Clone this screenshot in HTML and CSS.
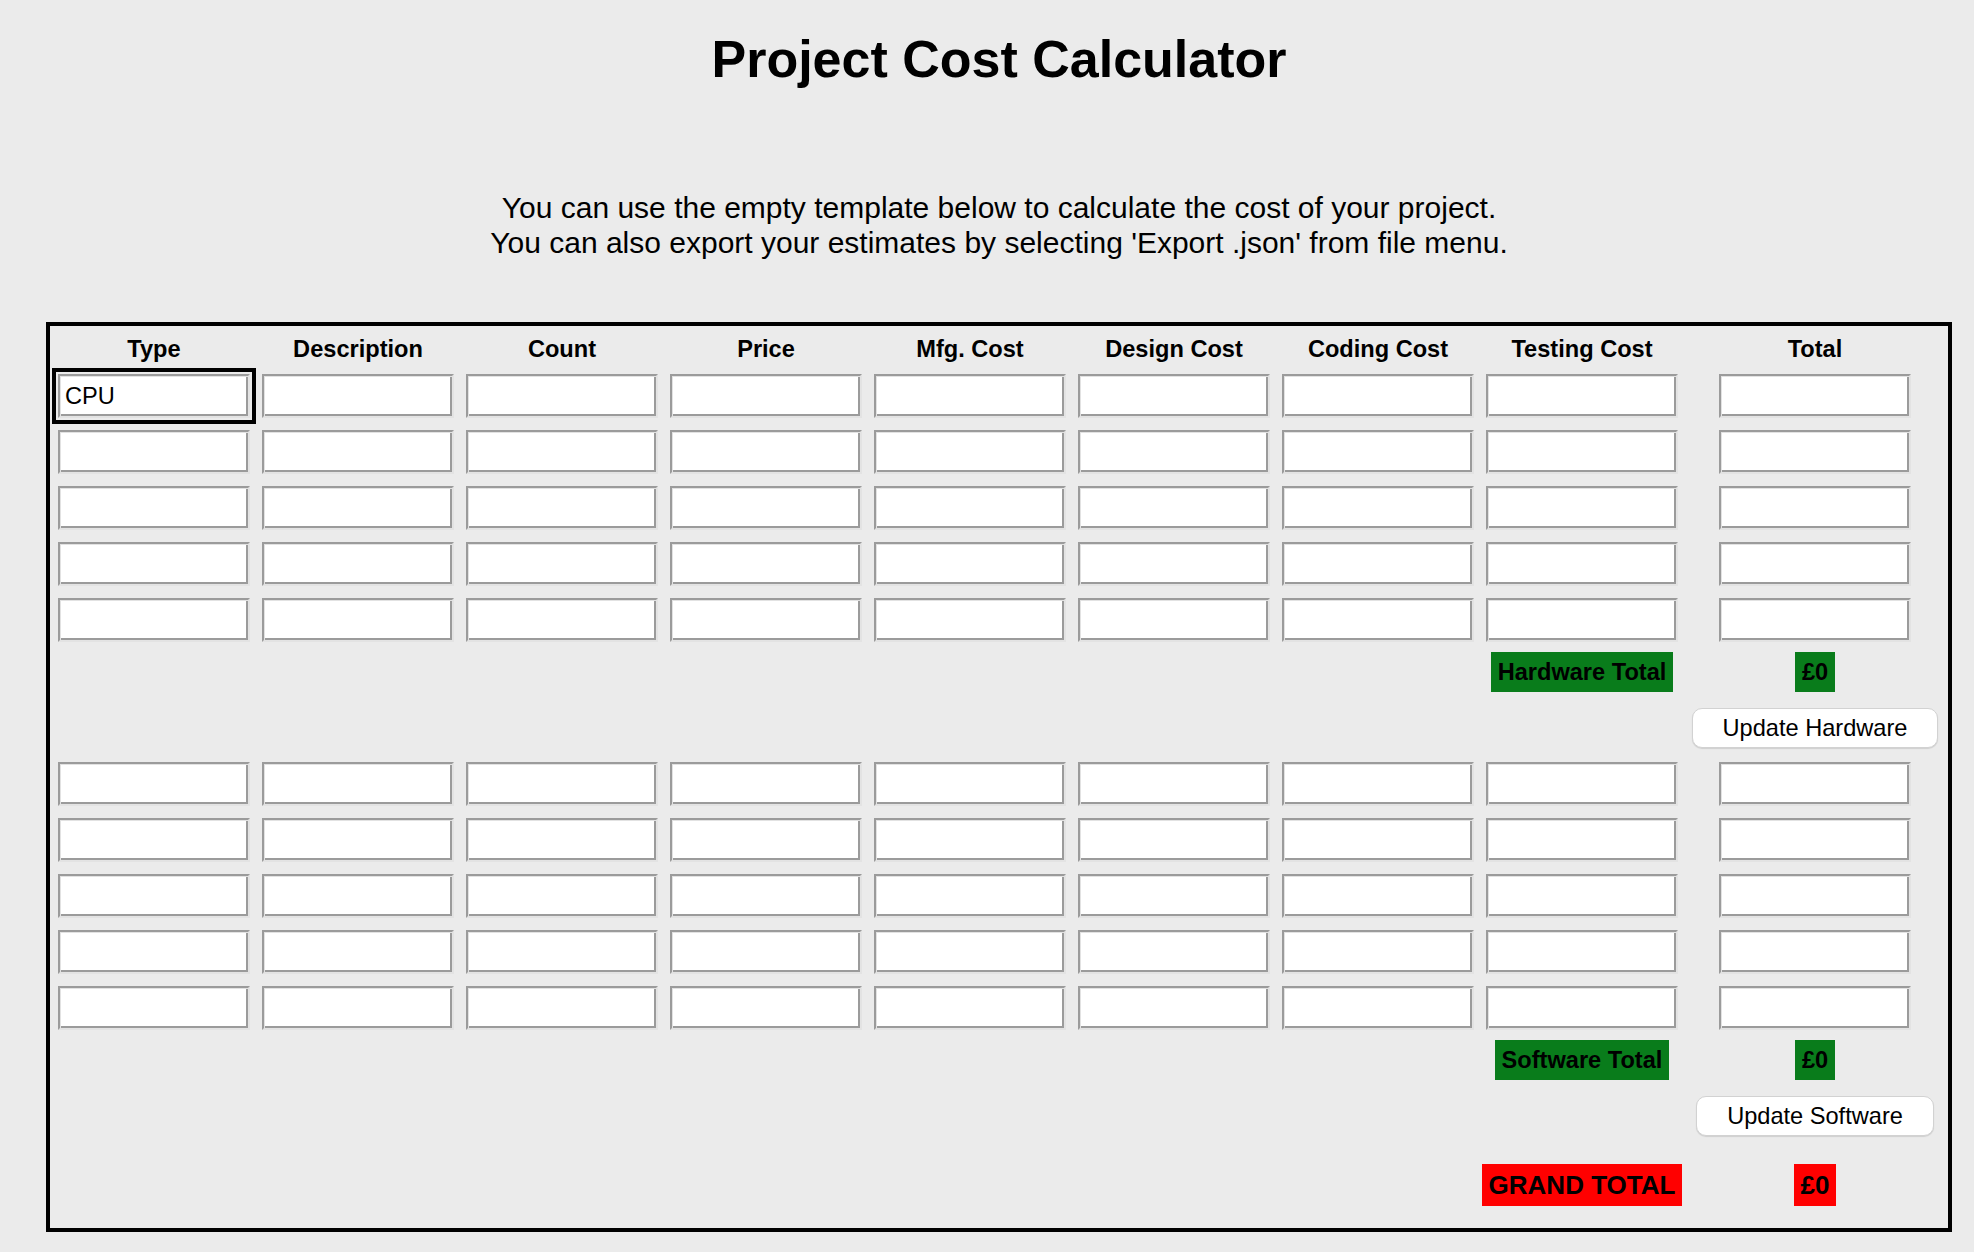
FILE: index.html
```html
<!DOCTYPE html>
<html lang="en">
<head>
<meta charset="utf-8">
<title>Project Cost Calculator</title>
<link rel="stylesheet" href="styles.css">
</head>
<body>
<div class="page">
  <h1 class="title">Project Cost Calculator</h1>
  <p class="intro">You can use the empty template below to calculate the cost of your project.<br>You can also export your estimates by selecting 'Export .json' from file menu.</p>

  <div class="calc">
    <div class="grid head">
      <div>Type</div><div>Description</div><div>Count</div><div>Price</div><div>Mfg. Cost</div><div>Design Cost</div><div>Coding Cost</div><div>Testing Cost</div><div>Total</div>
    </div>

    <div class="items">
      <div class="grid"><input class="field is-focused" type="text" value="CPU"><input class="field" type="text"><input class="field" type="text"><input class="field" type="text"><input class="field" type="text"><input class="field" type="text"><input class="field" type="text"><input class="field" type="text"><input class="field field-total" type="text"></div>
      <div class="grid"><input class="field" type="text"><input class="field" type="text"><input class="field" type="text"><input class="field" type="text"><input class="field" type="text"><input class="field" type="text"><input class="field" type="text"><input class="field" type="text"><input class="field field-total" type="text"></div>
      <div class="grid"><input class="field" type="text"><input class="field" type="text"><input class="field" type="text"><input class="field" type="text"><input class="field" type="text"><input class="field" type="text"><input class="field" type="text"><input class="field" type="text"><input class="field field-total" type="text"></div>
      <div class="grid"><input class="field" type="text"><input class="field" type="text"><input class="field" type="text"><input class="field" type="text"><input class="field" type="text"><input class="field" type="text"><input class="field" type="text"><input class="field" type="text"><input class="field field-total" type="text"></div>
      <div class="grid"><input class="field" type="text"><input class="field" type="text"><input class="field" type="text"><input class="field" type="text"><input class="field" type="text"><input class="field" type="text"><input class="field" type="text"><input class="field" type="text"><input class="field field-total" type="text"></div>
    </div>

    <div class="grid sum">
      <span class="tag tag-green">Hardware Total</span>
      <span class="tag tag-value tag-green">£0</span>
    </div>
    <div class="grid actions">
      <button class="btn" type="button">Update Hardware</button>
    </div>

    <div class="items items-software">
      <div class="grid"><input class="field" type="text"><input class="field" type="text"><input class="field" type="text"><input class="field" type="text"><input class="field" type="text"><input class="field" type="text"><input class="field" type="text"><input class="field" type="text"><input class="field field-total" type="text"></div>
      <div class="grid"><input class="field" type="text"><input class="field" type="text"><input class="field" type="text"><input class="field" type="text"><input class="field" type="text"><input class="field" type="text"><input class="field" type="text"><input class="field" type="text"><input class="field field-total" type="text"></div>
      <div class="grid"><input class="field" type="text"><input class="field" type="text"><input class="field" type="text"><input class="field" type="text"><input class="field" type="text"><input class="field" type="text"><input class="field" type="text"><input class="field" type="text"><input class="field field-total" type="text"></div>
      <div class="grid"><input class="field" type="text"><input class="field" type="text"><input class="field" type="text"><input class="field" type="text"><input class="field" type="text"><input class="field" type="text"><input class="field" type="text"><input class="field" type="text"><input class="field field-total" type="text"></div>
      <div class="grid"><input class="field" type="text"><input class="field" type="text"><input class="field" type="text"><input class="field" type="text"><input class="field" type="text"><input class="field" type="text"><input class="field" type="text"><input class="field" type="text"><input class="field field-total" type="text"></div>
    </div>

    <div class="grid sum">
      <span class="tag tag-green">Software Total</span>
      <span class="tag tag-value tag-green">£0</span>
    </div>
    <div class="grid actions">
      <button class="btn" type="button">Update Software</button>
    </div>

    <div class="grid sum grand">
      <span class="tag tag-grand tag-red">GRAND TOTAL</span>
      <span class="tag tag-grand tag-value tag-red">£0</span>
    </div>
  </div>
</div>
</body>
</html>
```

FILE: styles.css
```css
html, body {
  margin: 0;
  background: #ebebeb;
}

body {
  font-family: "Liberation Sans", Arial, Helvetica, sans-serif;
  color: #000;
}

.page {
  width: 1906px;
  margin-left: 46px;
  padding-top: 29px;
}

.title {
  margin: 0;
  font-size: 52px;
  line-height: 60px;
  font-weight: 700;
  text-align: center;
}

.intro {
  margin: 102px 0 0;
  font-size: 30px;
  line-height: 34.5px;
  text-align: center;
}

.calc {
  margin-top: 62px;
  border: 4px solid #000;
  padding: 10px 8px 22px;
  display: flex;
  flex-direction: column;
}

.grid {
  display: grid;
  grid-template-columns: repeat(8, 192px) 250px;
  column-gap: 12px;
}

.head {
  font-size: 23.6px;
  line-height: 27px;
  font-weight: 700;
  text-align: center;
}

.items {
  display: flex;
  flex-direction: column;
  gap: 12px;
  margin-top: 11px;
}

.items-software {
  margin-top: 14px;
}

.field {
  box-sizing: border-box;
  width: 192px;
  height: 44px;
  margin: 0;
  padding: 0 5px;
  border: 2px solid;
  border-color: #9b9b9b #e3e3e3 #e3e3e3 #9b9b9b;
  box-shadow: inset 1px 1px 0 #e2e2e2, inset -2px -2px 0 #9b9b9b;
  background: #fff;
  font-family: "Liberation Sans", Arial, Helvetica, sans-serif;
  font-size: 23.6px;
  color: #000;
  outline: none;
  border-radius: 0;
}

.field-total {
  justify-self: center;
}

.is-focused {
  outline: 4px solid #000;
  outline-offset: 2px;
}

.sum {
  margin-top: 10px;
}

.tag {
  grid-column: 8;
  justify-self: center;
  white-space: nowrap;
  padding: 6px 7px;
  font-size: 23.6px;
  line-height: 28px;
  font-weight: 700;
  color: #000;
}

.tag-value {
  grid-column: 9;
}

.tag-green {
  background: #097c1b;
}

.tag-red {
  background: #ff0000;
}

.tag-grand {
  font-size: 26px;
  line-height: 30px;
}

.grand {
  margin-top: 28px;
}

.actions {
  margin-top: 16px;
}

.btn {
  grid-column: 9;
  justify-self: center;
  box-sizing: border-box;
  height: 40px;
  margin: 0;
  padding: 0 30px;
  background: #fff;
  border: 1px solid #d2d2d2;
  border-radius: 10px;
  box-shadow: 0 1px 1px rgba(0, 0, 0, 0.12);
  font-family: "Liberation Sans", Arial, Helvetica, sans-serif;
  font-size: 23.6px;
  line-height: 28px;
  color: #000;
  white-space: nowrap;
}
```
